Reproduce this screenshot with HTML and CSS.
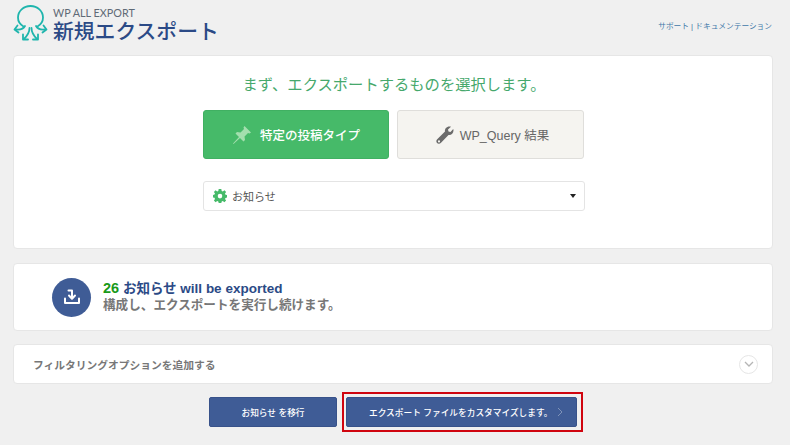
FILE: index.html
```html
<!DOCTYPE html>
<html lang="ja">
<head>
<meta charset="utf-8">
<title>新規エクスポート</title>
<link rel="stylesheet" href="styles.css">
</head>
<body>
<header class="header">
  <div class="brand">
    <svg class="logo" width="36" height="36" viewBox="0 0 36 36" fill="none" stroke="#1fb5ad" stroke-width="1.800" stroke-linecap="round" stroke-linejoin="round">
      <path d="M10.500 21.500C7 19.500 5 16.500 5 12.500C5 6 10.500 1 17.500 1C24.500 1 30 6 30 12.500C30 16.500 28 19.500 24.500 21.500"/>
      <path d="M12 21C10.500 24 7.500 25 3 24.500"/>
      <path d="M23 21C24.500 24 27.500 25 32 24.500"/>
      <path d="M4.500 20.500L1.500 24.500L5.500 27.500"/>
      <path d="M30.500 20.500L33.500 24.500L29.500 27.500"/>
      <path d="M16.500 23C16.500 28 14 31 11 34"/>
      <path d="M18.500 23C18.500 28 21 31 24 34"/>
      <path d="M10 29.500V34.500H15"/>
      <path d="M25 29.500V34.500H20"/>
    </svg>
    <div class="brand-text">
      <div class="brand-sub">WP ALL EXPORT</div>
      <h1 class="brand-title">新規エクスポート</h1>
    </div>
  </div>
  <nav class="help"><a>サポート</a> | <a>ドキュメンテーション</a></nav>
</header>

<main>
  <section class="card card-select">
    <h2 class="lead">まず、エクスポートするものを選択します。</h2>
    <div class="choices">
      <button class="choice choice-on">
        <svg width="20" height="20" viewBox="0 0 20 20" fill="#a3dfae"><path d="M12.500 1L19 7.500L17.500 8.500L16 8L12.500 11.500L13 15L11.500 16.500L8 13L1.500 19L1 18.500L7 12L3.500 8.500L5 7L8.500 7.500L12 4L11.500 2.500Z"/></svg>
        <span>特定の投稿タイプ</span>
      </button>
      <button class="choice choice-off">
        <svg width="18" height="18" viewBox="0 0 18 18" fill="#6b6b6b"><path fill-rule="evenodd" d="M17.500 4.500C17.500 7.500 15 9.500 12.500 9L5 16.800C3.800 18 2 18 1 16.900C0 15.800 .2 14.200 1.200 13.200L9 5.500C8.500 3 10.500 .5 13.500 .5C14 .5 14.500 .6 15 .8L12 3.500L12.500 5.500L14.500 6L17.200 3C17.400 3.500 17.500 4 17.500 4.500ZM3 14.300A1.100 1.100 0 1 0 3 16.500A1.100 1.100 0 1 0 3 14.300Z"/></svg>
        <span>WP_Query 結果</span>
      </button>
    </div>
    <div class="select">
      <svg width="14" height="14" viewBox="0 0 14 14" fill="#46ba69"><path fill-rule="evenodd" d="M5.700 0H8.300L8.700 1.900L9.800 2.400L11.500 1.300L13.100 3L12 4.600L12.500 5.700L14 6V8.500L12.500 8.900L12 10L13.100 11.600L11.400 13.200L9.800 12.100L8.700 12.500L8.300 14H5.700L5.300 12.500L4.200 12.100L2.600 13.200L.9 11.500L2 9.900L1.500 8.800L0 8.500V6L1.500 5.600L2 4.500L.9 2.900L2.600 1.300L4.200 2.400L5.300 1.900ZM7 4.800A2.300 2.300 0 1 0 7 9.400A2.300 2.300 0 1 0 7 4.800Z"/></svg>
      <span class="select-label">お知らせ</span>
      <span class="caret"></span>
    </div>
  </section>

  <section class="card card-count">
    <div class="round-icon">
      <svg width="18" height="18" viewBox="0 0 18 18" fill="none" stroke="#fff" stroke-width="2" stroke-linecap="round" stroke-linejoin="round"><path d="M2 10.500V15H16V10.500"/><path d="M5.500 2.500H9V10"/><path d="M6 7.500L9 10.800L12 7.500"/></svg>
    </div>
    <div class="count-text">
      <div class="count-main"><b class="num">26</b> お知らせ will be exported</div>
      <div class="count-sub">構成し、エクスポートを実行し続けます。</div>
    </div>
  </section>

  <section class="card card-filter">
    <span class="filter-label">フィルタリングオプションを追加する</span>
    <span class="expand">
      <svg width="10" height="6" viewBox="0 0 10 6" fill="none" stroke="#b5b5b5" stroke-width="1.300"><path d="M1 1L5 5L9 1"/></svg>
    </span>
  </section>

  <div class="actions">
    <button class="btn btn-back">お知らせ を移行</button>
    <div class="highlight">
      <button class="btn btn-next">エクスポート ファイルをカスタマイズします。<svg class="chev" width="6" height="10" viewBox="0 0 6 10" fill="none" stroke="#7f93b8" stroke-width="1"><path d="M1 1L5 5L1 9"/></svg></button>
    </div>
  </div>
</main>
</body>
</html>
```
FILE: styles.css
```css
* { box-sizing: border-box; }
html, body { margin: 0; height: 100%; }
body {
  width: 790px;
  height: 445px;
  overflow: hidden;
  padding: 0 17px 0 13px;
  background: #f0f0f0;
  font-family: "Liberation Sans", "Noto Sans CJK JP", sans-serif;
  color: #555;
}
.header {
  height: 55px;
  display: flex;
  justify-content: space-between;
  align-items: flex-start;
}
.brand { display: flex; align-items: flex-start; padding-top: 4px; }
.logo { margin-top: 1px; }
.brand-text { margin-left: 4px; }
.brand-sub { font-family: Lato, "Liberation Sans", sans-serif; font-size: 10.800px; line-height: 12px; color: #5f6a76; margin-top: 3px; }
.brand-title { margin: 0; font-size: 20.800px; line-height: 26px; font-weight: 500; color: #2b4a86; }
.help { font-size: 7.700px; line-height: 12px; margin: 21px 1px 0 0; color: #446e9e; }
.help a { color: #3f78a8; }

.card {
  background: #fff;
  border: 1px solid #e6e6e6;
  border-radius: 4px;
}
.card-select {
  height: 194px;
  padding: 17px 187px 0 189px;
}
.lead {
  margin: 0;
  text-align: center;
  font-size: 15.300px;
  line-height: 24px;
  font-weight: 400;
  color: #46a86c;
}
.choices { display: flex; gap: 8px; margin-top: 13px; }
.choice {
  width: 186px;
  height: 49px;
  display: flex;
  align-items: center;
  justify-content: center;
  gap: 8px;
  border-radius: 3px;
  font: inherit;
  font-size: 12.500px;
}
.choice-on { background: #46ba69; border: 1px solid #40b062; color: #fff; font-weight: 500; }
.choice-off { background: #f5f4f0; border: 1px solid #dfdedb; color: #666; padding-right: 2px; width: 187px; gap: 6px; }
.select {
  width: 382px;
  height: 30px;
  margin-top: 22px;
  padding: 0 9px;
  display: flex;
  align-items: center;
  background: #fff;
  border: 1px solid #e4e4e4;
  border-radius: 3px;
}
.select-label { margin-left: 5px; font-size: 11px; color: #555; }
.caret {
  margin-left: auto;
  margin-right: -1px;
  border-left: 3.500px solid transparent;
  border-right: 3.500px solid transparent;
  border-top: 4px solid #222;
}

.card-count {
  height: 68px;
  margin-top: 14px;
  padding: 0 0 0 38px;
  display: flex;
  align-items: center;
  gap: 12px;
}
.round-icon {
  width: 39px;
  height: 39px;
  border-radius: 50%;
  background: #3f5c96;
  display: flex;
  align-items: center;
  justify-content: center;
}
.count-main { font-size: 13.500px; line-height: 16px; font-weight: 700; color: #2b4a86; }
.num { color: #1a9a1a; font-size: 14.500px; }
.count-sub { font-size: 12.600px; line-height: 17px; font-weight: 700; color: #777; }

.card-filter {
  height: 40px;
  margin-top: 13px;
  padding: 0 14px 0 19px;
  display: flex;
  align-items: center;
  justify-content: space-between;
}
.filter-label { font-size: 10.750px; font-weight: 700; color: #777; }
.expand {
  width: 19px;
  height: 19px;
  border: 1px solid #e6e6e6;
  border-radius: 50%;
  display: flex;
  align-items: center;
  justify-content: center;
}

.actions {
  display: flex;
  align-items: center;
  margin-top: 8px;
  padding-left: 196px;
  gap: 5px;
}
.btn {
  height: 30px;
  background: #3f5c96;
  border: 1px solid #38528a;
  border-radius: 2px;
  color: #fff;
  font: inherit;
  font-size: 8.700px;
  font-weight: 500;
  white-space: nowrap;
}
.btn-back { width: 128px; }
.highlight {
  width: 241px;
  height: 40px;
  border: 2px solid #d0050f;
  padding: 3px 2px;
}
.btn-next {
  width: 231px;
  padding-left: 22px;
  display: flex;
  align-items: center;
}
.chev { margin-left: 5px; }
```
